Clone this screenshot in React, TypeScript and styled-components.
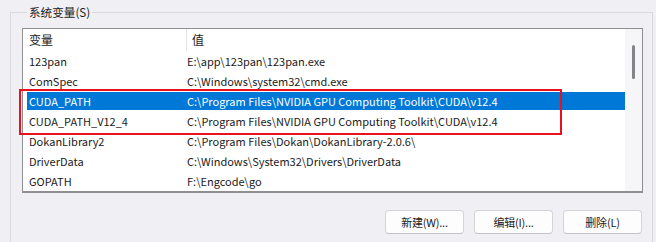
import React from "react";
import styled, { createGlobalStyle } from "styled-components";

const Global = createGlobalStyle`
  html, body { margin: 0; padding: 0; background: #f0eff3; }
  body {
    width: 656px; height: 242px; overflow: hidden;
    font-family: "Noto Sans CJK SC", "Noto Sans", sans-serif;
    font-size: 12px; color: #1b1b1b;
  }
`;

const Group = styled.div`
  margin: 12px 3px 0 10px;
  border: 1px solid #d9d8dc;
  border-bottom: none;
  padding: 0 9px 0 11px;
  height: 240px;
  box-sizing: border-box;
`;

const Legend = styled.div`
  display: block;
  width: max-content;
  margin: -8px 0 0 5px;
  padding: 0 2px;
  height: 15px;
  line-height: 15px;
  font-size: 11.6px;
  background: #f0eff3;
  color: #1b1b1b;
`;

const ListWrap = styled.div`
  position: relative;
  margin-top: 8px;
  width: 621px;
  height: 165px;
  box-sizing: border-box;
  border: 1px solid #8f8f93;
  border-bottom-width: 2px;
  background: #fff;
  display: flex;
`;

const Body = styled.div`
  flex: 1;
  display: flex;
  flex-direction: column;
`;

const Header = styled.div`
  display: grid;
  grid-template-columns: 157px 1fr;
  height: 22px;
  align-items: center;
  padding-left: 6px;
`;

const HeadCell = styled.div<{ $divider?: boolean }>`
  height: 22px;
  line-height: 21px;
  ${(p) => (p.$divider ? "border-left: 1px solid #e5e5e5; padding-left: 5px;" : "")}
`;

const Row = styled.div<{ $selected?: boolean }>`
  display: grid;
  grid-template-columns: 158px 1fr;
  height: 18px;
  margin: 1px 0 1px 4px;
  padding-left: 2px;
  line-height: 18px;
  font-size: 11px;
  white-space: nowrap;
  background: ${(p) => (p.$selected ? "#0078d7" : "transparent")};
  color: ${(p) => (p.$selected ? "#ffffff" : "#1b1b1b")};
`;

const Cell = styled.div`
  overflow: hidden;
`;

const ScrollTrack = styled.div`
  width: 17px;
  background: #f6f5f8;
  display: flex;
  justify-content: center;
  padding-top: 16px;
  box-sizing: border-box;
`;

const Thumb = styled.div`
  width: 3px;
  height: 34px;
  border-radius: 2px;
  background: #858589;
`;

const Highlight = styled.div`
  position: absolute;
  left: -4px;
  top: 60px;
  width: 543px;
  height: 46px;
  border: 2px solid #e8111d;
  box-sizing: border-box;
  pointer-events: none;
`;

const Buttons = styled.div`
  display: flex;
  justify-content: flex-end;
  gap: 10px;
  width: 620px;
  margin-top: 17px;
`;

const Button = styled.button`
  width: 79px;
  height: 24px;
  background: #fdfdfd;
  border: 1px solid #d4d4d8;
  border-bottom-color: #c4c4c8;
  border-radius: 4px;
  font: inherit;
  font-size: 11px;
  letter-spacing: -0.2px;
  color: #1b1b1b;
  padding: 0;
`;

const rows: [string, string][] = [
  ["123pan", "E:\\app\\123pan\\123pan.exe"],
  ["ComSpec", "C:\\Windows\\system32\\cmd.exe"],
  ["CUDA_PATH", "C:\\Program Files\\NVIDIA GPU Computing Toolkit\\CUDA\\v12.4"],
  ["CUDA_PATH_V12_4", "C:\\Program Files\\NVIDIA GPU Computing Toolkit\\CUDA\\v12.4"],
  ["DokanLibrary2", "C:\\Program Files\\Dokan\\DokanLibrary-2.0.6\\"],
  ["DriverData", "C:\\Windows\\System32\\Drivers\\DriverData"],
  ["GOPATH", "F:\\Engcode\\go"],
];

export default function App() {
  return (
    <>
      <Global />
      <Group>
        <Legend>系统变量(S)</Legend>
        <ListWrap>
          <Body>
            <Header>
              <HeadCell>变量</HeadCell>
              <HeadCell $divider>值</HeadCell>
            </Header>
            {rows.map(([k, v], i) => (
              <Row key={k} $selected={i === 2}>
                <Cell>{k}</Cell>
                <Cell>{v}</Cell>
              </Row>
            ))}
          </Body>
          <ScrollTrack>
            <Thumb />
          </ScrollTrack>
          <Highlight />
        </ListWrap>
        <Buttons>
          <Button>新建(W)...</Button>
          <Button>编辑(I)...</Button>
          <Button>删除(L)</Button>
        </Buttons>
      </Group>
    </>
  );
}
